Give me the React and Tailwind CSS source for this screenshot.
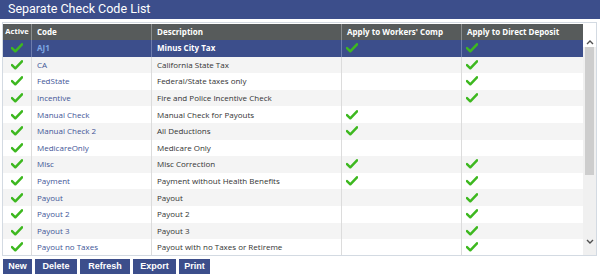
import React from "react";

const rows = [
  { code: "AJ1", desc: "Minus City Tax", wc: true, dd: true },
  { code: "CA", desc: "California State Tax", wc: false, dd: true },
  { code: "FedState", desc: "Federal/State taxes only", wc: false, dd: true },
  { code: "Incentive", desc: "Fire and Police Incentive Check", wc: false, dd: true },
  { code: "Manual Check", desc: "Manual Check for Payouts", wc: true, dd: false },
  { code: "Manual Check 2", desc: "All Deductions", wc: true, dd: false },
  { code: "MedicareOnly", desc: "Medicare Only", wc: false, dd: false },
  { code: "Misc", desc: "Misc Correction", wc: true, dd: true },
  { code: "Payment", desc: "Payment without Health Benefits", wc: true, dd: true },
  { code: "Payout", desc: "Payout", wc: false, dd: true },
  { code: "Payout 2", desc: "Payout 2", wc: false, dd: true },
  { code: "Payout 3", desc: "Payout 3", wc: false, dd: true },
  { code: "Payout no Taxes", desc: "Payout with no Taxes or Retireme", wc: false, dd: true },
];

const Check = () => (
  <svg width="12" height="10" viewBox="0 0 12 10">
    <path d="M1 5.2 L4.3 8.3 L11 1.3" fill="none" stroke="#3db81f" strokeWidth="2.5" strokeLinecap="round" strokeLinejoin="round" />
  </svg>
);

const App = () => {
  return (
    <div className="w-[600px] h-[277px] bg-white overflow-hidden" style={{ fontFamily: '"Open Sans", sans-serif' }}>
      <div
        className="h-[19px] bg-[#3c4e8b] flex items-center pl-[8px] text-white text-[12.5px] leading-none"
        style={{ fontFamily: "Roboto, sans-serif" }}
      >
        Separate Check Code List
      </div>
      <div className="mx-[2px] mt-[3px] w-[595px] h-[234px] border border-[#d3dae2] flex">
        <div className="w-[580px] flex flex-col">
          <div className="h-[16px] mt-[1px] bg-[#575b5b] flex text-white text-[8px] font-bold">
            <div className="w-[29px] flex items-center justify-center border-r border-[#8a8e8e] text-[7.5px]">Active</div>
            <div className="w-[120px] flex items-center pl-[5px] border-r border-[#8a8e8e]">Code</div>
            <div className="w-[190px] flex items-center pl-[5px] border-r border-[#8a8e8e]">Description</div>
            <div className="w-[120px] flex items-center pl-[5px] border-r border-[#8a8e8e]">Apply to Workers' Comp</div>
            <div className="w-[121px] flex items-center pl-[5px]">Apply to Direct Deposit</div>
          </div>
          <div className="flex-1 overflow-hidden">
            {rows.map((r, i) => {
              const sel = i === 0;
              const bg = sel ? "bg-[#3c4e8b]" : i % 2 === 1 ? "bg-[#f4f4f4]" : "bg-white";
              const line = sel ? "border-[#6d7cae]" : "border-[#dcdcdc]";
              return (
                <div key={r.code} className={`h-[16.6px] flex text-[8px] ${bg}`}>
                  <div className={`w-[29px] flex items-center justify-center border-r ${line}`}>
                    <Check />
                  </div>
                  <div className={`w-[120px] flex items-center pl-[5px] border-r ${line} ${sel ? "text-[#7ea6e3] font-bold" : "text-[#3f5597]"}`}>
                    {r.code}
                  </div>
                  <div className={`w-[190px] flex items-center pl-[5px] border-r ${line} whitespace-nowrap overflow-hidden ${sel ? "text-white font-bold" : "text-[#333333]"}`}>
                    {r.desc}
                  </div>
                  <div className={`w-[120px] flex items-center pl-[4px] border-r ${line}`}>
                    {r.wc && <Check />}
                  </div>
                  <div className="w-[121px] flex items-center pl-[4px]">
                    {r.dd && <Check />}
                  </div>
                </div>
              );
            })}
          </div>
        </div>
        <div className="w-[13px] bg-[#f0f0f0] flex flex-col items-center">
          <div className="h-[24px] w-full bg-white flex items-end justify-center pb-[2px]">
            <svg width="8" height="5" viewBox="0 0 8 5">
              <path d="M1 4 L4 1 L7 4" fill="none" stroke="#505050" strokeWidth="1.4" />
            </svg>
          </div>
          <div className="w-[9px] h-[128px] bg-[#cdcdcd]" />
          <div className="flex-1" />
          <div className="h-[16px] flex items-start justify-center">
            <svg width="8" height="5" viewBox="0 0 8 5">
              <path d="M1 1 L4 4 L7 1" fill="none" stroke="#505050" strokeWidth="1.4" />
            </svg>
          </div>
        </div>
      </div>
      <div className="flex gap-[3px] pl-[3px] mt-[3px]" style={{ fontFamily: '"Liberation Sans", Arial, sans-serif' }}>
        {["New", "Delete", "Refresh", "Export", "Print"].map((b, i) => (
          <div
            key={b}
            className={`h-[15px] bg-[#3c4e8b] text-white text-[9px] font-bold flex items-center justify-center ${["w-[29px]", "w-[42px]", "w-[50px]", "w-[43px]", "w-[31px]"][i]}`}
          >
            {b}
          </div>
        ))}
      </div>
    </div>
  );
};

export default App;
